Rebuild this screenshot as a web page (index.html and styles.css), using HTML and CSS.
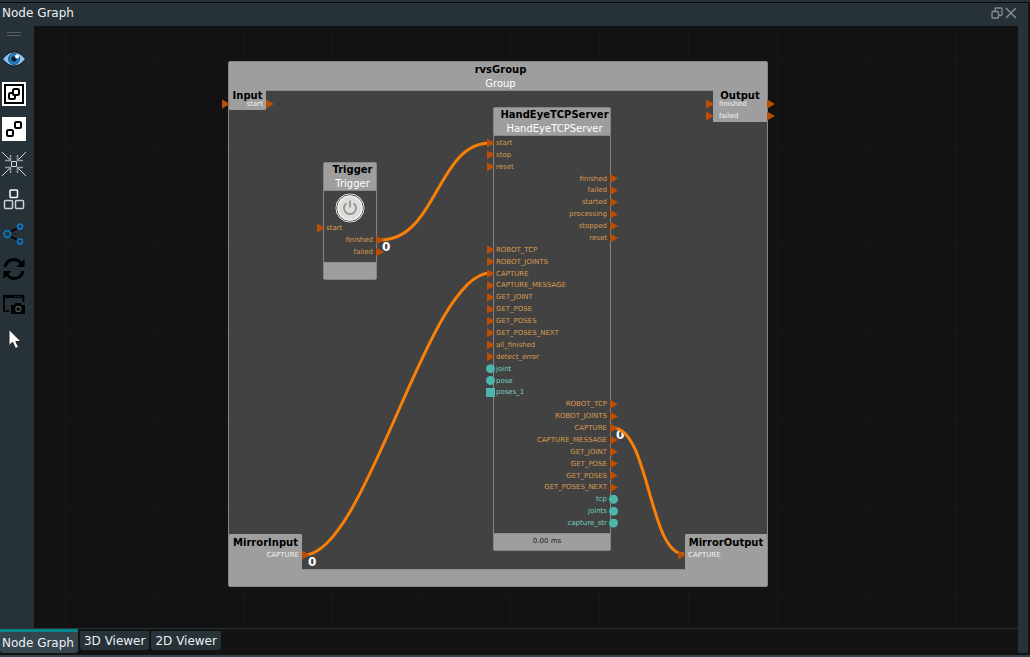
FILE: index.html
```html
<!DOCTYPE html>
<html lang="en">
<head>
<meta charset="utf-8">
<title>Node Graph</title>
<link rel="stylesheet" href="styles.css">
</head>
<body>
<div class="app">
  <div class="workspace">
    <section class="panel">
      <header class="panel-header">
        <h1 class="panel-title">Node Graph</h1>
        <button class="window-button" aria-label="Float panel">
          <svg width="12" height="12" viewBox="0 0 12 12" fill="none" stroke="#858b8e" stroke-width="1.300"><rect x="4" y="1" width="7" height="7.500" rx="1"/><rect x="1" y="4.500" width="6.500" height="6.500" rx="1" fill="#263238"/></svg>
        </button>
        <button class="window-button" aria-label="Close panel">
          <svg width="12" height="12" viewBox="0 0 12 12" fill="none" stroke="#858b8e" stroke-width="1.500"><path d="M1 1 11 11M11 1 1 11"/></svg>
        </button>
      </header>
      <div class="panel-body">
        <nav class="toolbar" aria-label="Graph tools">
          <div class="grip"></div>
          <button class="tool" aria-label="Show">
            <svg viewBox="0 0 24 24"><path d="M.5 12Q6 5 12 5t11.500 7Q18 19 12 19T.5 12Z" fill="#90c4ee" stroke="#101c24"/><circle cx="12" cy="12" r="5.500" fill="#1f83cb" stroke="#153f60" stroke-width=".8"/><circle cx="12" cy="12" r="2.800" fill="#10202c"/><circle cx="15" cy="9.500" r="2" fill="#fff"/></svg>
          </button>
          <button class="tool" aria-label="Group nodes">
            <svg viewBox="0 0 24 24"><path fill="#fff" d="M0 0h24v24H0z"/><g fill="none" stroke="#000" stroke-width="2"><path d="M3 3h18v18H3z"/><rect x="7" y="11" width="6" height="6" rx="1.500"/><rect x="11" y="7" width="6" height="6" rx="1.500" fill="#fff"/></g></svg>
          </button>
          <button class="tool" aria-label="Ungroup nodes">
            <svg viewBox="0 0 24 24"><path fill="#fff" d="M0 0h24v24H0z"/><g fill="none" stroke="#000" stroke-width="2"><rect x="5" y="13" width="6" height="6" rx="1.500"/><rect x="13" y="5" width="6" height="6" rx="1.500"/></g></svg>
          </button>
          <button class="tool" aria-label="Fit to view">
            <svg viewBox="0 0 24 24" fill="none" stroke="#d4d8d9"><path d="M0 0 8 8M24 0 16 8M0 24 8 16M24 24 16 16"/><path stroke="#929a9d" stroke-width="1.500" d="M8.500 3v5.500H3M15.500 3v5.500H21M8.500 21v-5.500H3M15.500 21v-5.500H21"/><path d="M9.500 9.500h5v5h-5z"/></svg>
          </button>
          <button class="tool" aria-label="Arrange nodes">
            <svg viewBox="0 0 24 24" fill="none" stroke="#cdd0d1" stroke-width="1.500"><rect x="8" y="3" width="7.500" height="7.500" rx="1" stroke="#fff"/><rect x="2.500" y="13.500" width="8" height="8" rx="1"/><rect x="13.500" y="13.500" width="8" height="8" rx="1"/></svg>
          </button>
          <button class="tool" aria-label="Show links">
            <svg viewBox="0 0 24 24" fill="none"><path stroke="#000" stroke-width="1.500" d="M8 10 16 6M8 14l8 4.500"/><path stroke="#000" stroke-dasharray="1 1" d="M9 12h5"/><g stroke="#087ac8" stroke-width="1.700"><circle cx="5.300" cy="12" r="3.300"/><circle cx="18" cy="4.600" r="2.500"/><circle cx="18" cy="19.500" r="2.500"/></g></svg>
          </button>
          <button class="tool" aria-label="Refresh">
            <svg viewBox="0 0 24 24"><path fill="none" stroke="#000" stroke-width="3" d="M3 10C5 1 15 .5 19.500 7M21 14C19 23 9 23.500 4.500 17"/><path d="M22.500 2v8H14.500ZM1.500 22v-8H9.500Z"/></svg>
          </button>
          <button class="tool" aria-label="Capture graph">
            <svg viewBox="0 0 24 24"><path fill="none" stroke="#000" stroke-width="1.700" d="M7.500 19H2V4h19.500v6"/><path d="M1.200 3h20.800v3H1.200z"/><path stroke="#263238" stroke-dasharray="1.500 1" d="M12.500 4.500h7"/><path d="M10 13h2l1.500-2h5l1.500 2h3v9H9v-9z"/><circle cx="16.300" cy="17" r="2.500" fill="none" stroke="#4b575c" stroke-width="1.300"/></svg>
          </button>
          <button class="tool" aria-label="Select">
            <svg viewBox="0 0 24 24"><path d="M7 2.500v16l3.600-3.300L13.500 21.500l3-1.500-2.700-5.500H19Z" fill="#fff" stroke="#2a2320" stroke-width="1"/></svg>
          </button>
        </nav>
        <main class="canvas">
          <section class="node group-node">
            <header class="node-header"><h2>rvsGroup</h2><p>Group</p></header>
            <div class="node-body"></div>
            <footer class="group-footer"></footer>
          </section>
          <span class="badge badge-trigger">0</span>
          <span class="badge badge-capture">0</span>
          <span class="badge badge-mirror">0</span>
          <svg class="wires" aria-hidden="true">
            <g fill="none" stroke="#f98006" stroke-width="3">
              <path d="M346 214C403 214 403 117 456 117"/>
              <path d="M270 529C332 529 394 247 456 247"/>
              <path d="M579 402C615 402 615 528 650 528"/>
            </g>
          </svg>
          <section class="terminal input-node">
            <h2>Input</h2>
            <ul class="ports"><li class="port both">start</li></ul>
          </section>
          <section class="terminal output-node">
            <h2>Output</h2>
            <ul class="ports"><li class="port both left">finished</li><li class="port both left">failed</li></ul>
          </section>
          <section class="terminal mirror-input">
            <h2>MirrorInput</h2>
            <ul class="ports"><li class="port out">CAPTURE</li></ul>
          </section>
          <section class="terminal mirror-output">
            <h2>MirrorOutput</h2>
            <ul class="ports"><li class="port in">CAPTURE</li></ul>
          </section>
          <section class="node trigger-node">
            <header class="node-header"><h2>Trigger</h2><p>Trigger</p></header>
            <div class="node-body">
              <button class="power" aria-label="Trigger">
                <svg width="30" height="30" viewBox="0 0 30 30" fill="none"><circle cx="15" cy="15" r="14" fill="#deddda" stroke="#f1f1f1"/><circle cx="15" cy="15" r="13.200" stroke="#3a3a3a" stroke-width=".9"/><circle cx="15" cy="15" r="12" stroke="#f8f8f6" stroke-width="1.200"/><path d="M11.500 10.200a6 6 0 1 0 7 0M15 7.500v7" stroke="#939392" stroke-width="1.800"/></svg>
              </button>
              <ul class="ports"><li class="port in">start</li><li class="port out">finished</li><li class="port out">failed</li></ul>
            </div>
            <footer class="node-footer"></footer>
          </section>
          <section class="node server-node">
            <header class="node-header"><h2>HandEyeTCPServer</h2><p>HandEyeTCPServer</p></header>
            <div class="node-body">
              <ul class="ports">
                <li class="port in">start</li><li class="port in">stop</li><li class="port in">reset</li>
                <li class="port out">finished</li><li class="port out">failed</li><li class="port out">started</li><li class="port out">processing</li><li class="port out">stopped</li><li class="port out">reset</li>
                <li class="port in">ROBOT_TCP</li><li class="port in">ROBOT_JOINTS</li><li class="port in">CAPTURE</li><li class="port in">CAPTURE_MESSAGE</li><li class="port in">GET_JOINT</li><li class="port in">GET_POSE</li><li class="port in">GET_POSES</li><li class="port in">GET_POSES_NEXT</li><li class="port in">all_finished</li><li class="port in">detect_error</li>
                <li class="port in data">joint</li><li class="port in data">pose</li><li class="port in data list">poses_1</li>
                <li class="port out">ROBOT_TCP</li><li class="port out">ROBOT_JOINTS</li><li class="port out">CAPTURE</li><li class="port out">CAPTURE_MESSAGE</li><li class="port out">GET_JOINT</li><li class="port out">GET_POSE</li><li class="port out">GET_POSES</li><li class="port out">GET_POSES_NEXT</li>
                <li class="port out data">tcp</li><li class="port out data">joints</li><li class="port out data">capture_str</li>
              </ul>
            </div>
            <footer class="node-footer">0.00 ms</footer>
          </section>
        </main>
        <div class="splitter"></div>
      </div>
    </section>
  </div>
  <div class="tabs" role="tablist">
    <button class="tab active" role="tab" aria-selected="true">Node Graph</button>
    <button class="tab" role="tab">3D Viewer</button>
    <button class="tab" role="tab">2D Viewer</button>
    <div class="tabs-edge"></div>
  </div>
</div>
</body>
</html>
```
FILE: styles.css
```css
* { box-sizing: border-box; }

body {
  margin: 0;
  background: #131313;
  color: #eceff1;
  font: 12px/16px "DejaVu Sans", sans-serif;
}

h1, h2, p, ul { margin: 0; padding: 0; }
ul { list-style: none; }
button { border: 0; padding: 0; background: none; color: inherit; font: inherit; }
svg { display: block; }

.app {
  display: flex;
  flex-direction: column;
  min-height: 100vh;
  border-top: 2px solid #263238;
  border-bottom: 2px solid #35444c;
}

.workspace {
  display: flex;
  flex: 1;
  padding-right: 2px;
  border-top: 1px solid #0b0b0b;
}

.panel { display: flex; flex: 1; flex-direction: column; }

.panel-header {
  display: flex;
  align-items: center;
  gap: 2px;
  height: 23px;
  padding: 0 11px 3px 2px;
  background: #263238;
}

.panel-title { flex: 1; font-size: 12px; font-weight: 400; }
.window-button { width: 12px; height: 12px; }

.panel-body { display: flex; flex: 1; }

.toolbar {
  display: flex;
  flex-direction: column;
  gap: 11px;
  width: 34px;
  padding: 6px 0 0 2px;
  background: #263238;
}

.grip {
  width: 14px;
  height: 4px;
  margin: 0 5px;
  border: solid #566064;
  border-width: 1px 0;
}

.tool { width: 24px; height: 24px; }
.tool svg { width: 24px; height: 24px; }

.canvas {
  position: relative;
  flex: 1;
  min-height: 603px;
  overflow: hidden;
  background-color: #121212;
  background-image: linear-gradient(90deg, #171717 1px, transparent 1px), linear-gradient(#171717 1px, transparent 1px);
  background-size: 89px 89px;
  background-position: 31px 36px;
  border-bottom: 1px solid #263238;
}

.splitter { width: 10px; background: #263238; }

.tabs {
  display: flex;
  align-items: flex-start;
  gap: 2px;
  height: 26px;
  padding-right: 2px;
}

.tab {
  height: 19px;
  margin-top: 2px;
  padding: 0 4px;
  border-radius: 0 0 3px 3px;
  background: #263238;
}

.tab.active {
  height: 24px;
  margin-top: 0;
  padding: 0 4px 0 2px;
  border-top: 3px solid #05858c;
  background: #35454d;
}

.tabs-edge { width: 10px; height: 24px; margin-left: auto; background: #263238; }

/* Nodes are placed freely on the canvas. */
.node, .terminal { position: absolute; }

.node {
  display: flex;
  flex-direction: column;
  border: 1px solid #858585;
  border-radius: 2px;
  background: #424242;
}

.node-header {
  height: 28px;
  padding-left: 5px;
  background: #9e9e9e;
  border-bottom: 1px solid #888;
  text-align: center;
}

h2 { color: #000; font-size: 10px; line-height: 14px; }
.node-header p { color: #fff; font-size: 10px; line-height: 14px; }
.node-header h2, .node-header p { white-space: nowrap; }
.group-node .node-header { padding-top: 1px; height: 29px; }
.node-body { flex: 1; }

.node-footer, .group-footer { height: 17px; background: #9e9e9e; border-top: 1px solid #8e8e8e; }
.node-footer { padding-right: 10px; color: #222; font-size: 7px; line-height: 14px; text-align: center; }

.group-node { left: 194px; top: 35px; width: 540px; height: 526px; }
.trigger-node { left: 289px; top: 136px; width: 54px; }
.server-node { left: 459px; top: 81px; width: 118px; }
.server-node .node-body { padding: 1px 0 4px; }
.trigger-node .node-body { padding-bottom: 4px; }

.power { display: block; width: 30px; height: 30px; margin: 2px auto -1px; }

.terminal { border-radius: 1px; background: #9e9e9e; }
.terminal h2 { line-height: 12px; text-align: center; }
.input-node { left: 195px; top: 64px; width: 37px; height: 20px; }
.output-node { left: 679px; top: 64px; width: 54px; height: 32px; }
.mirror-input { left: 195px; top: 508px; width: 73px; height: 36px; }
.mirror-output { left: 651px; top: 508px; width: 82px; height: 36px; }
.mirror-input h2, .mirror-output h2 { padding-top: 3px; }
.input-node .ports, .output-node .ports { margin-top: -4px; }

.ports { display: grid; grid-auto-rows: 12px; }
.server-node .ports { height: 392px; grid-auto-rows: 1fr; }

.port {
  display: flex;
  align-items: center;
  min-height: 0;
  gap: 1px;
  color: #d99a4e;
  font-size: 7px;
  line-height: 8px;
}

.terminal .port { color: #f0f0f0; }
.port.in, .port.both { margin-left: -7px; }
.port.out { justify-content: flex-end; gap: 3px; margin-right: -8px; }
.port.both { justify-content: space-between; gap: 3px; margin-right: -8px; }
.port.left { gap: 5px; }
.port.left::after { margin-left: auto; }

.port.in::before, .port.out::after, .port.both::before, .port.both::after {
  content: "";
  flex: none;
  width: 8px;
  height: 9px;
  background: #bb4e05;
  clip-path: polygon(0 0, 100% 50%, 0 100%);
}

.mirror-output .port { gap: 2px; }
.input-node .port::before { margin-right: auto; }

.port.data { color: #78cfc2; gap: 1px; }
.port.in.data { margin-left: -8px; }
.port.out.data { margin-right: -8px; gap: 2px; }
.port.in.data::before, .port.out.data::after { width: 9px; height: 9px; background: #4db6ac; clip-path: circle(50%); }
.port.in.data.list::before { clip-path: none; }

/* Wires and their message counters lie over the group. */
.wires { position: absolute; left: 0; top: 0; width: 100%; height: 100%; }

.badge {
  position: absolute;
  color: #fff;
  font-size: 12px;
  font-weight: 700;
  line-height: 12px;
}

.badge-trigger { left: 348px; top: 215px; }
.badge-capture { left: 582px; top: 403px; }
.badge-mirror { left: 274px; top: 530px; }
```
